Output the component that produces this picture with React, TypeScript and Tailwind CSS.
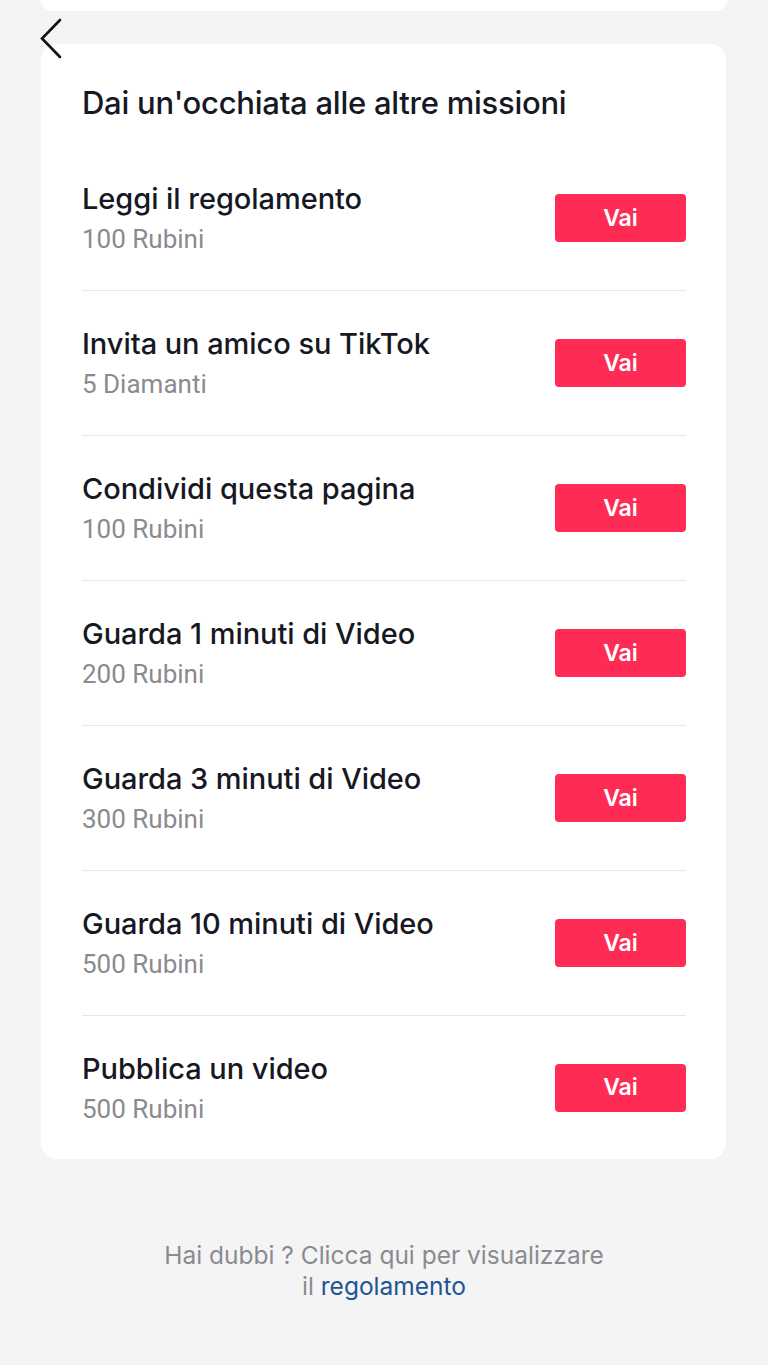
import React from "react";

const rows = [
  ["Leggi il regolamento", "100 Rubini"],
  ["Invita un amico su TikTok", "5 Diamanti"],
  ["Condividi questa pagina", "100 Rubini"],
  ["Guarda 1 minuti di Video", "200 Rubini"],
  ["Guarda 3 minuti di Video", "300 Rubini"],
  ["Guarda 10 minuti di Video", "500 Rubini"],
  ["Pubblica un video", "500 Rubini"],
];

export default function App() {
  return (
    <div className="relative min-h-[1365px] w-[768px] bg-[#f4f4f4] font-['Inter',sans-serif]">
      <div className="mx-[41px] h-[11px] rounded-b-[16px] bg-white" />
      <svg
        className="absolute left-[36px] top-[16px]"
        width="30"
        height="46"
        viewBox="0 0 30 46"
        fill="none"
      >
        <path d="M24 4 L6 22.5 L24 41" stroke="#111" strokeWidth="2.6" strokeLinecap="round" strokeLinejoin="miter" />
      </svg>
      <div className="ml-[41px] mr-[42px] mt-[33px] rounded-[16px] bg-white pl-[41px] pr-[40px]">
        <div className="pt-[41px] pb-[25px] text-[31px] leading-[36px] font-medium text-[#161823] tracking-[-0.25px]">
          Dai un'occhiata alle altre missioni
        </div>
        {rows.map(([t, s], i) => (
          <div
            key={i}
            className={`flex items-center justify-between ${i < rows.length - 1 ? "h-[145px] border-b border-[#e8e8e8]" : "h-[143px]"}`}
          >
            <div className="flex flex-col">
              <div className="text-[29px] leading-[34px] font-medium text-[#161823] tracking-[-0.05px]">{t}</div>
              <div className="mt-[8px] text-[26px] leading-[30px] text-[#8a8b91] font-['Roboto',sans-serif]">{s}</div>
            </div>
            <button className="flex h-[48px] w-[131px] items-center justify-center rounded-[4px] bg-[#fe2c55] text-[23px] font-semibold text-white">
              Vai
            </button>
          </div>
        ))}
      </div>
      <div className="mt-[81px] text-center text-[24.5px] leading-[31px] text-[#8a8b91]">
        <div>Hai dubbi ? Clicca qui per visualizzare</div>
        <div>
          il <span className="text-[#1e5593]">regolamento</span>
        </div>
      </div>
    </div>
  );
}
